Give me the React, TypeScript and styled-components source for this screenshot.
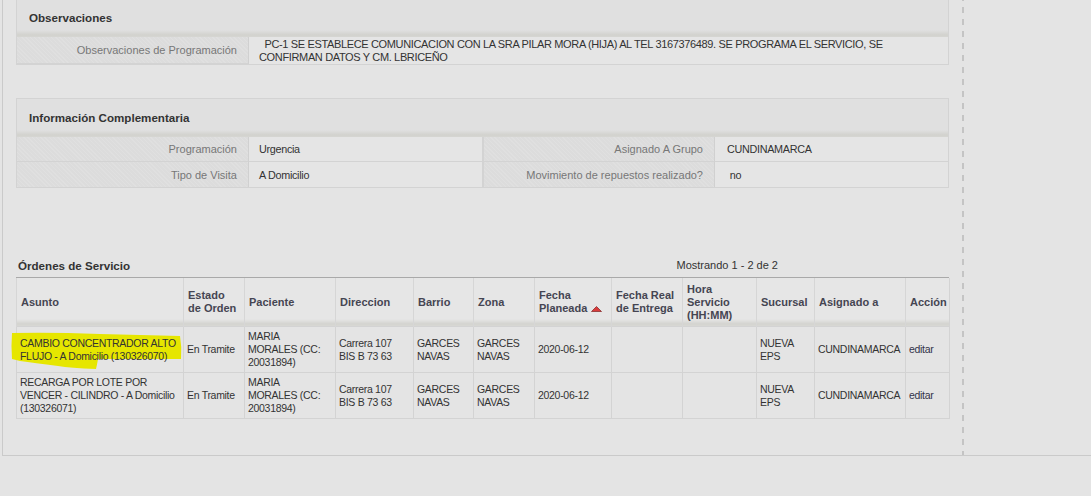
import React from "react";
import styled, { createGlobalStyle } from "styled-components";

const GlobalStyle = createGlobalStyle`
  html, body {
    margin: 0;
    padding: 0;
    background: #e4e4e4;
  }
  body {
    font-family: "Liberation Sans", Arial, sans-serif;
    font-size: 11px;
    color: #333;
  }
`;

type Orden = {
  asunto: string;
  estado: string;
  paciente: string;
  direccion: string;
  barrio: string;
  zona: string;
  fecha: string;
  sucursal: string;
  asignado: string;
  marked?: boolean;
};

const ordenes: Orden[] = [
  {
    asunto: "CAMBIO CONCENTRADOR ALTO FLUJO - A Domicilio (130326070)",
    estado: "En Tramite",
    paciente: "MARIA MORALES (CC: 20031894)",
    direccion: "Carrera 107 BIS B 73 63",
    barrio: "GARCES NAVAS",
    zona: "GARCES NAVAS",
    fecha: "2020-06-12",
    sucursal: "NUEVA EPS",
    asignado: "CUNDINAMARCA",
    marked: true,
  },
  {
    asunto: "RECARGA POR LOTE POR VENCER - CILINDRO - A Domicilio (130326071)",
    estado: "En Tramite",
    paciente: "MARIA MORALES (CC: 20031894)",
    direccion: "Carrera 107 BIS B 73 63",
    barrio: "GARCES NAVAS",
    zona: "GARCES NAVAS",
    fecha: "2020-06-12",
    sucursal: "NUEVA EPS",
    asignado: "CUNDINAMARCA",
  },
];

const widths = [167, 61, 91, 78, 60, 61, 77, 71, 74, 58, 91, 44];

export default function App() {
  return (
    <>
      <GlobalStyle />
      <Shell>
        <Main>
          <Panel $first>
            <PanelHeader>Observaciones</PanelHeader>
            <ObsRow>
              <Label>Observaciones de Programación</Label>
              <ObsValue>
                {"\u00a0\u00a0PC-1 SE ESTABLECE COMUNICACION CON LA SRA PILAR MORA (HIJA) AL TEL 3167376489. SE PROGRAMA EL SERVICIO, SE CONFIRMAN DATOS Y CM. LBRICEÑO"}
              </ObsValue>
            </ObsRow>
          </Panel>

          <Panel>
            <PanelHeader>Información Complementaria</PanelHeader>
            <InfoGrid>
              <Label>Programación</Label>
              <Value>Urgencia</Value>
              <Label $split>Asignado A Grupo</Label>
              <Value $wide>CUNDINAMARCA</Value>
              <Label $last>Tipo de Visita</Label>
              <Value $last>A Domicilio</Value>
              <Label $split $last>Movimiento de repuestos realizado?</Label>
              <Value $wide $last>&nbsp;no</Value>
            </InfoGrid>
          </Panel>

          <TitleBar>
            <TableTitle>Órdenes de Servicio</TableTitle>
            <Paging>Mostrando 1 - 2 de 2</Paging>
          </TitleBar>

          <Grid>
            <colgroup>
              {widths.map((w, i) => (
                <col key={i} style={{ width: w }} />
              ))}
            </colgroup>
            <thead>
              <tr>
                <Th>Asunto</Th>
                <Th>Estado de Orden</Th>
                <Th>Paciente</Th>
                <Th>Direccion</Th>
                <Th>Barrio</Th>
                <Th>Zona</Th>
                <Th>
                  Fecha Planeada{" "}
                  <SortIcon width="11" height="6" viewBox="0 0 11 6">
                    <path d="M5.5 0.5 L10.5 5.5 L0.5 5.5 Z" fill="#d93c3c" stroke="#8c3030" strokeWidth="0.8" />
                  </SortIcon>
                </Th>
                <Th>Fecha Real de Entrega</Th>
                <Th>Hora Servicio (HH:MM)</Th>
                <Th>Sucursal</Th>
                <Th>Asignado a</Th>
                <Th>Acción</Th>
              </tr>
            </thead>
            <tbody>
              {ordenes.map((o, i) => (
                <tr key={i}>
                  <Td $marked={o.marked}>
                    {o.marked && (
                      <Marker width="176" height="46" viewBox="0 0 176 46">
                        <path
                          d="M2 6 Q40 5 90 7 L170 9 Q172 20 171 32 L88 32 Q87 38 86 42 Q60 41 48 39 Q24 36 10 34 L2 32 Q1 18 2 6 Z"
                          fill="#e6e600"
                        />
                      </Marker>
                    )}
                    <CellText>{o.asunto}</CellText>
                  </Td>
                  <Td>{o.estado}</Td>
                  <Td>{o.paciente}</Td>
                  <Td>{o.direccion}</Td>
                  <Td>{o.barrio}</Td>
                  <Td>{o.zona}</Td>
                  <Td>{o.fecha}</Td>
                  <Td />
                  <Td />
                  <Td>{o.sucursal}</Td>
                  <Td>{o.asignado}</Td>
                  <Td>
                    <EditLink href="#">editar</EditLink>
                  </Td>
                </tr>
              ))}
            </tbody>
          </Grid>
        </Main>
        <Side />
      </Shell>
    </>
  );
}

const Shell = styled.div`
  margin-left: 2px;
  height: 456px;
  box-sizing: border-box;
  border-left: 1px solid #cacaca;
  border-bottom: 1px solid #cacaca;
  display: grid;
  grid-template-columns: 959px 1fr;
  overflow: hidden;
`;

const Main = styled.div`
  padding: 0 13px 0 13px;
`;

const Side = styled.div`
  background-image: linear-gradient(to bottom, #c4c4c4 50%, transparent 50%);
  background-size: 2px 12px;
  background-repeat: repeat-y;
  background-position: 0 7px;
`;

const Panel = styled.div<{ $first?: boolean }>`
  border: 1px solid #d3d3d3;
  margin-top: ${(p) => (p.$first ? "-2px" : "33px")};
`;

const PanelHeader = styled.div`
  height: 38px;
  line-height: 38px;
  padding-left: 12px;
  font-size: 11.6px;
  font-weight: bold;
  color: #333;
  background: linear-gradient(
    to bottom,
    #e0e0e0 0px,
    #e0e0e0 31px,
    #d2d2ce 36px,
    #d6d6d2 38px
  );
`;

const hatch = `
  background-color: #dcdcdc;
  background-image: repeating-linear-gradient(
    45deg,
    rgba(255, 255, 255, 0.1) 0px,
    rgba(255, 255, 255, 0.1) 1px,
    transparent 1px,
    transparent 3px
  );
`;

const Label = styled.div<{ $split?: boolean; $last?: boolean }>`
  ${hatch}
  color: #777;
  text-align: right;
  padding-right: 11px;
  display: flex;
  align-items: center;
  justify-content: flex-end;
  border-right: 1px solid #d0d0d0;
  border-left: ${(p) => (p.$split ? "2px solid #d3d3d3" : "none")};
  border-bottom: ${(p) => (p.$last ? "none" : "1px solid #d3d3d3")};
`;

const Value = styled.div<{ $wide?: boolean; $last?: boolean }>`
  background: #e5e5e5;
  color: #333;
  font-size: 10.8px;
  letter-spacing: -0.3px;
  display: flex;
  align-items: center;
  padding-left: ${(p) => (p.$wide ? "12px" : "10px")};
  border-bottom: ${(p) => (p.$last ? "none" : "1px solid #d3d3d3")};
`;

const ObsRow = styled.div`
  display: grid;
  grid-template-columns: 232px 1fr;
  height: 27px;
`;

const ObsValue = styled.div`
  background: #e5e5e5;
  color: #333;
  padding: 0 40px 0 10px;
  font-size: 11px;
  letter-spacing: -0.35px;
  line-height: 13px;
  display: flex;
  align-items: center;
`;

const InfoGrid = styled.div`
  display: grid;
  grid-template-columns: 232px 233px 233px 1fr;
  grid-auto-rows: 25px;
`;

const TitleBar = styled.div`
  margin-top: 68px;
  display: flex;
  align-items: center;
  justify-content: space-between;
  height: 18px;
  padding: 0 171px 3px 2px;
  border-bottom: 1px solid #a9a9a9;
`;

const TableTitle = styled.span`
  font-weight: bold;
  font-size: 11.6px;
  color: #333;
`;

const Paging = styled.span`
  color: #333;
`;

const Grid = styled.table`
  width: 933px;
  table-layout: fixed;
  border-collapse: collapse;
  border: 1px solid #d3d3d3;
  border-top: none;
`;

const Th = styled.th`
  height: 48px;
  padding: 0 4px;
  text-align: left;
  font-size: 11px;
  font-weight: bold;
  line-height: 13px;
  color: #454552;
  border-left: 1px solid #d6d6d6;
  background: linear-gradient(
    to bottom,
    #e6e6e6 0px,
    #e6e6e6 41px,
    #d3d3cf 46px,
    #d8d8d4 48px
  );
`;

const SortIcon = styled.svg`
  vertical-align: 0px;
  margin-left: 1px;
`;

const Td = styled.td<{ $marked?: boolean }>`
  position: ${(p) => (p.$marked ? "relative" : "static")};
  height: 45px;
  padding: 0 5px 0 3px;
  border: 1px solid #d3d3d3;
  font-size: 10.5px;
  letter-spacing: -0.3px;
  line-height: 13px;
  color: #333;
  vertical-align: middle;
  background: #e4e4e4;
`;

const Marker = styled.svg`
  position: absolute;
  left: -7px;
  top: 0;
  overflow: visible;
  z-index: 0;
`;

const CellText = styled.span`
  position: relative;
  z-index: 1;
`;

const EditLink = styled.a`
  color: #33334a;
  text-decoration: none;
`;
